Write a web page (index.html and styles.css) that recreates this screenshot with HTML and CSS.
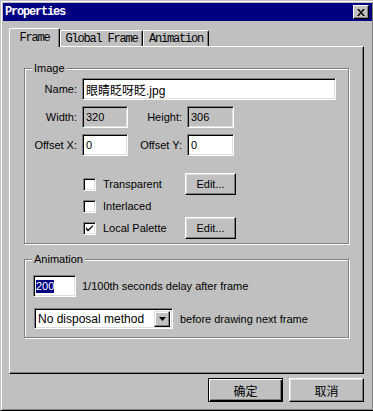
FILE: index.html
```html
<!DOCTYPE html>
<html>

<head>
  <title>Properties</title>
  <link rel="stylesheet" href="styles.css">
</head>

<body>
  <div class="window">
    <div class="title-bar">
      <span class="title">Properties</span>
      <button class="close-button">
        <svg width="8" height="7" viewBox="0 0 8 7">
          <path d="M0 0h2l2 2.5 2-2.5h2l-3 3.5 3 3.5h-2l-2-2.5-2 2.5h-2l3-3.5z" fill="#000" />
        </svg>
      </button>
    </div>

    <div class="tabs">
      <div class="tab tab-active">Frame</div>
      <div class="tab tab-global">Global Frame</div>
      <div class="tab tab-anim">Animation</div>
    </div>

    <div class="panel">
      <fieldset class="group group-image">
        <legend>Image</legend>
        <div class="field-grid">
          <label class="field-label row-start">Name:</label>
          <div class="textbox name-box">眼睛眨呀眨.jpg</div>
          <label class="field-label row-start">Width:</label>
          <div class="textbox readonly">320</div>
          <label class="field-label">Height:</label>
          <div class="textbox readonly">306</div>
          <label class="field-label row-start">Offset X:</label>
          <div class="textbox">0</div>
          <label class="field-label">Offset Y:</label>
          <div class="textbox">0</div>
        </div>
        <div class="check-grid">
          <div class="check-row"><span class="checkbox"></span>Transparent</div>
          <button class="win-button edit-button">Edit...</button>
          <div class="check-row"><span class="checkbox"></span>Interlaced</div>
          <div></div>
          <div class="check-row">
            <span class="checkbox">
              <svg width="7" height="7" viewBox="0 0 7 7">
                <path d="M0 2v2.5l2 2 5-5v-1.5l-5 4.5z" fill="#000" />
              </svg>
            </span>Local Palette
          </div>
          <button class="win-button edit-button">Edit...</button>
        </div>
      </fieldset>

      <fieldset class="group group-anim">
        <legend>Animation</legend>
        <div class="anim-row">
          <div class="textbox delay-box"><span class="selected-text">200</span></div>
          <span>1/100th seconds delay after frame</span>
        </div>
        <div class="anim-row anim-row-second">
          <div class="select">
            <span class="select-text">No disposal method</span>
            <span class="select-arrow">
              <svg width="7" height="4" viewBox="0 0 7 4">
                <path d="M0 0h7l-3.5 4z" fill="#000" />
              </svg>
            </span>
          </div>
          <span>before drawing next frame</span>
        </div>
      </fieldset>
    </div>

    <div class="dialog-buttons">
      <button class="win-button dialog-button default-button">确定</button>
      <button class="win-button dialog-button">取消</button>
    </div>
  </div>
</body>

</html>
```

FILE: styles.css
```css
* {
  box-sizing: border-box;
}

body {
  margin: 0;
  overflow: hidden;
  background-color: #c0c0c0;
  color: #000;
  font-family: "Liberation Sans", Arial, "Noto Sans CJK SC", sans-serif;
  font-size: 11px;
}

.window {
  width: 374px;
  height: 411px;
  background-color: #c0c0c0;
  border: 1px solid;
  border-color: #c0c0c0 #000 #000 #c0c0c0;
  box-shadow: inset 1px 1px #fff, inset -1px -1px #808080;
  padding: 2px 1px 2px 2px;
}

.title-bar {
  height: 18px;
  background-color: #000080;
  display: flex;
  align-items: center;
  justify-content: space-between;
  padding-left: 2px;
  padding-right: 3px;
}

.title {
  color: white;
  font-family: "Liberation Mono", "Courier New", monospace;
  font-size: 12px;
  font-weight: bold;
  letter-spacing: -1.2px;
}

.close-button {
  width: 16px;
  height: 14px;
  padding: 0;
  background-color: #c0c0c0;
  border: 1px solid;
  border-color: #fff #000 #000 #fff;
  box-shadow: inset -1px -1px #808080;
  display: flex;
  align-items: center;
  justify-content: center;
}

.tabs {
  display: flex;
  align-items: flex-end;
  height: 18px;
  margin-top: 7px;
  margin-left: 6px;
}

.tab {
  height: 16px;
  background-color: #c0c0c0;
  border-top: 1px solid #fff;
  border-left: 1px solid #fff;
  border-right: 1px solid #000;
  border-radius: 2px 2px 0 0;
  box-shadow: inset -1px 0 #808080;
  display: flex;
  justify-content: center;
  padding-top: 2px;
  font-family: "Liberation Mono", "Courier New", monospace;
  font-size: 12px;
  letter-spacing: -1.2px;
  line-height: 13px;
}

.tab-active {
  width: 51px;
  height: 19px;
  margin-bottom: -1px;
  position: relative;
  z-index: 1;
  padding-top: 3px;
}

.tab-global {
  width: 83px;
}

.tab-anim {
  width: 66px;
}

.panel {
  width: 355px;
  height: 328px;
  margin-left: 6px;
  border: 1px solid;
  border-color: #fff #000 #000 #fff;
  box-shadow: inset -1px -1px #808080;
  padding: 14px 14px 0 14px;
}

.group {
  margin: 0;
  min-width: 0;
  border: 1px solid #808080;
  box-shadow: inset 1px 1px #fff, 1px 1px #fff;
}

.group legend {
  margin-left: 7px;
  padding: 0 2px;
  line-height: 14px;
  background-color: #c0c0c0;
}

.group-image {
  padding: 3px 12px 4px 0;
}

.field-grid {
  display: grid;
  grid-template-columns: 57px 46px 59px 47px 1fr;
  grid-auto-rows: 22px;
  row-gap: 6px;
}

.field-label {
  align-self: center;
  text-align: right;
  padding-right: 5px;
  white-space: nowrap;
}

.row-start {
  grid-column: 1;
}

.textbox {
  background-color: white;
  border: 1px solid;
  border-color: #808080 #fff #fff #808080;
  box-shadow: inset 1px 1px #000, inset -1px -1px #dfdfdf;
  padding: 0 3px;
  display: flex;
  align-items: center;
  white-space: nowrap;
  overflow: hidden;
}

.name-box {
  grid-column: 2 / -1;
  font-size: 12px;
}

.readonly {
  background-color: #c0c0c0;
}

.check-grid {
  display: grid;
  grid-template-columns: 102px 51px;
  grid-auto-rows: 22px;
  margin-top: 17px;
  margin-left: 58px;
}

.check-row {
  display: flex;
  align-items: center;
  gap: 7px;
  white-space: nowrap;
}

.checkbox {
  width: 13px;
  height: 13px;
  background-color: white;
  border: 1px solid;
  border-color: #808080 #fff #fff #808080;
  box-shadow: inset 1px 1px #000, inset -1px -1px #dfdfdf;
  display: flex;
  align-items: center;
  justify-content: center;
}

.win-button {
  padding: 0;
  background-color: #c0c0c0;
  border: 1px solid;
  border-color: #fff #000 #000 #fff;
  box-shadow: inset -1px -1px #808080, inset 1px 1px #dfdfdf;
  font-family: "Liberation Sans", Arial, "Noto Sans CJK SC", sans-serif;
  font-size: 11px;
  color: #000;
}

.edit-button {
  width: 51px;
  height: 22px;
}

.group-anim {
  margin-top: 8px;
  padding: 9px 0 8px 0;
}

.anim-row {
  display: flex;
  align-items: center;
  gap: 6px;
  margin-left: 8px;
  white-space: nowrap;
}

.anim-row-second {
  margin-top: 11px;
  margin-left: 9px;
  gap: 7px;
}

.delay-box {
  width: 43px;
  height: 22px;
  padding: 0 1px 0 2px;
}

.selected-text {
  background-color: #000080;
  color: white;
  line-height: 13px;
}

.select {
  width: 139px;
  height: 21px;
  background-color: white;
  border: 1px solid;
  border-color: #808080 #fff #fff #808080;
  box-shadow: inset 1px 1px #000, inset -1px -1px #dfdfdf;
  padding: 2px;
  display: flex;
  align-items: center;
  justify-content: space-between;
}

.select-text {
  padding-left: 1px;
  font-size: 12px;
}

.select-arrow {
  width: 16px;
  height: 16px;
  background-color: #c0c0c0;
  border: 1px solid;
  border-color: #dfdfdf #000 #000 #dfdfdf;
  box-shadow: inset -1px -1px #808080, inset 1px 1px #fff;
  display: flex;
  align-items: center;
  justify-content: center;
}

.dialog-buttons {
  display: flex;
  justify-content: flex-end;
  gap: 6px;
  margin-top: 4px;
  padding-right: 8px;
}

.dialog-button {
  width: 75px;
  height: 24px;
  font-family: "Noto Sans CJK SC", sans-serif;
  font-size: 12px;
}

.default-button {
  border: 1px solid #000;
  box-shadow: inset 1px 1px #fff, inset -1px -1px #000, inset -2px -2px #808080;
}
```
